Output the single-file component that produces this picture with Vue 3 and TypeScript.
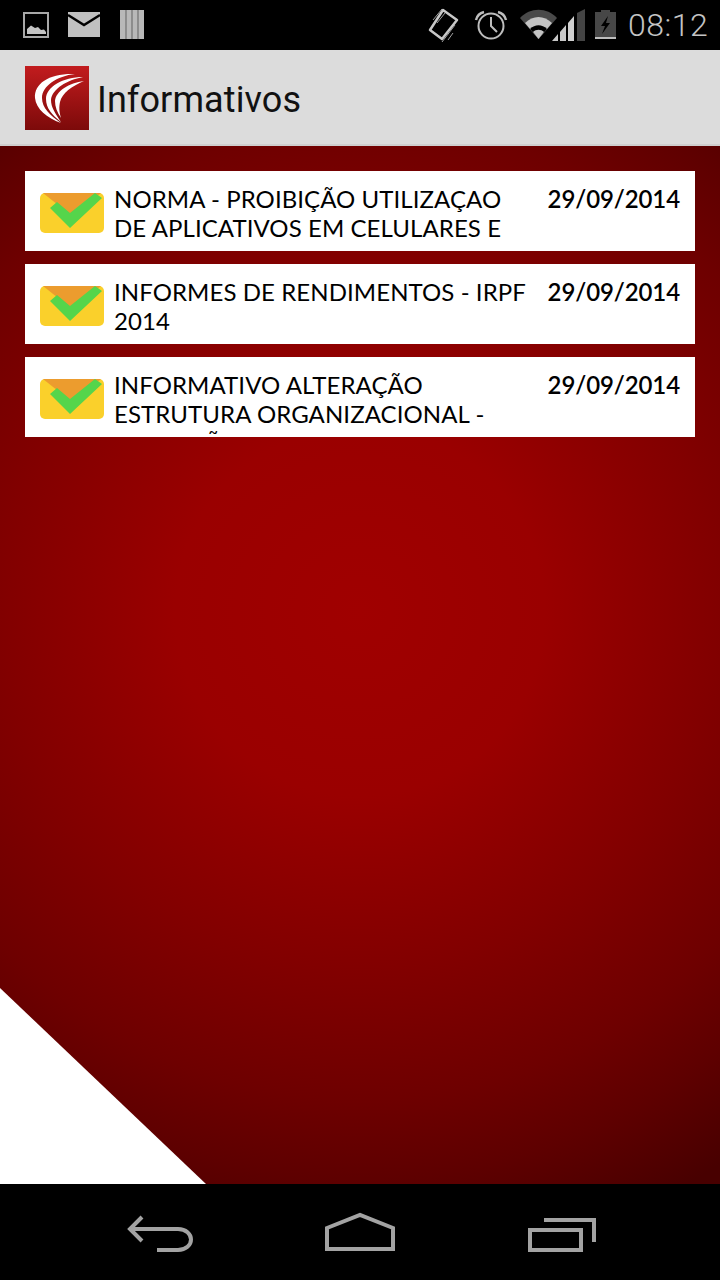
<script setup lang="ts">
interface Notice {
  title: string
  date: string
}
const notices: Notice[] = [
  { title: 'NORMA - PROIBIÇÃO UTILIZAÇAO DE APLICATIVOS EM CELULARES E TABLETS', date: '29/09/2014' },
  { title: 'INFORMES DE RENDIMENTOS - IRPF 2014', date: '29/09/2014' },
  { title: 'INFORMATIVO ALTERAÇÃO ESTRUTURA ORGANIZACIONAL - INOVAÇÃO', date: '29/09/2014' },
]
</script>

<template>
  <div class="screen">
    <header class="status">
      <svg class="ic" width="28" height="50" viewBox="0 0 28 50">
        <rect x="2" y="13" width="24" height="24" fill="none" stroke="#a8a8a8" stroke-width="2" />
        <path d="M5 34V29L9 25.500L13 28L16 27L19 30L22 29.500L24 32V34Z" fill="#c4c4c4" />
      </svg>
      <svg class="ic mail" width="34" height="50" viewBox="0 0 34 50">
        <rect x="1" y="12" width="32" height="25" fill="#c0c0c0" />
        <path d="M1 15L17 25L33 15" fill="none" stroke="#000" stroke-width="2.500" />
      </svg>
      <svg class="ic books" width="26" height="50" viewBox="0 0 26 50">
        <path d="M1 10H25V39H1Z" fill="#b8b8b8" />
        <path d="M7 10V39M13 10V39M19 10V39" stroke="#707070" stroke-width="1.200" />
      </svg>
      <svg class="ic vibrate" width="31" height="50" viewBox="0 0 31 50">
        <path d="M15 10L29 20L14 39L2 30Z" fill="none" stroke="#c8c8c8" stroke-width="2.500" stroke-linejoin="round" />
        <path d="M5 20L14 9M9 23L17 13M14 42L27 25M20 40L25 33" stroke="#a0a0a0" stroke-width="1" fill="none" />
      </svg>
      <svg class="ic alarm" width="34" height="50" viewBox="0 0 34 50">
        <circle cx="17" cy="26" r="12.500" fill="none" stroke="#bdbdbd" stroke-width="2" />
        <path d="M17 17V26L23 32" fill="none" stroke="#bdbdbd" stroke-width="2" />
        <path d="M2 20C3 16 6 13 10 12M32 20C31 16 28 13 24 12" fill="none" stroke="#bdbdbd" stroke-width="2.500" />
      </svg>
      <svg class="ic signal" width="67" height="50" viewBox="0 0 67 50">
        <path d="M1 18C11 7 28 7 38 18L19.500 39Z" fill="#4a4a4a" />
        <path d="M6 23C14 15 25 15 33 23L19.500 39Z" fill="#c4c4c4" />
        <path d="M11 29C16 24 23 24 28 29L19.500 39Z" fill="#000" />
        <path d="M14 32C17 29 22 29 25 32L19.500 39Z" fill="#c4c4c4" />
        <path d="M33 41L39 34V41Z M41 32L47 25V41H41Z" fill="#c8c8c8" />
        <path d="M49 23L55 16V41H49Z" fill="#d0d0d0" />
        <path d="M58 13L66 9V41H58Z" fill="#444" />
      </svg>
      <svg class="ic battery" width="23" height="50" viewBox="0 0 23 50">
        <path d="M7 10H16V12H22V37H1V12H7Z" fill="#474747" />
        <rect x="1" y="37" width="21" height="2" fill="#bdbdbd" />
        <path d="M14 16L7 26H11L8 34L16 23H12Z" fill="#000" />
      </svg>
      <span class="clock">08:12</span>
    </header>

    <div class="appbar">
      <svg class="logo" width="64" height="64" viewBox="0 0 64 64">
        <defs>
          <linearGradient id="logoFill" x1="0" y1="0" x2="0" y2="1">
            <stop offset="0" stop-color="#c21c1e" />
            <stop offset="1" stop-color="#7c0a0a" />
          </linearGradient>
        </defs>
        <rect width="64" height="64" fill="url(#logoFill)" />
        <g fill="#fff">
          <path d="M50 8C25 7 9 17 10 32C11 43 22 52 36 57C25 49 17 42 17 32C17 20 32 10 50 8Z" />
          <path d="M58 11C38 11 21 21 21 33C21 42 27 49 36 56C30 47 26 41 26 34C27 23 42 14 58 11Z" />
          <path d="M59 15C44 17 31 25 30 35C30 41 32 46 36 52C34 45 34 41 35 36C37 27 47 20 59 15Z" />
        </g>
      </svg>
      <h1 class="title">Informativos</h1>
    </div>

    <main class="content">
      <div class="corner"></div>
      <ul class="list">
        <li v-for="n in notices" :key="n.title" class="row">
          <svg class="envelope" width="64" height="40" viewBox="0 0 64 40">
            <rect width="64" height="40" rx="5" fill="#fad02b" />
            <path d="M3 0H61L32 23Z" fill="#ec9c2e" />
            <path d="M10 15L17 9L30 20L55 0L62 5L30 35Z" fill="#55d54b" />
          </svg>
          <p class="text">{{ n.title }}</p>
          <span class="date">{{ n.date }}</span>
        </li>
      </ul>
    </main>

    <nav class="nav">
      <svg width="80" height="96" viewBox="0 0 80 96">
        <path d="M22 33L10 45L22 57M10 45H58C66 45 71 50 71 55.500C71 61 66 66 58 66H37" fill="none" stroke="#a3a3a3" stroke-width="4" />
      </svg>
      <svg width="80" height="96" viewBox="0 0 80 96">
        <path d="M7 44L40 31L73 44V65H7Z" fill="none" stroke="#a3a3a3" stroke-width="4" />
      </svg>
      <svg width="80" height="96" viewBox="0 0 80 96">
        <rect x="10" y="46" width="51" height="20" fill="none" stroke="#a3a3a3" stroke-width="4" />
        <path d="M24 36H74V58" fill="none" stroke="#a3a3a3" stroke-width="4" />
      </svg>
    </nav>
  </div>
</template>

<style>
html, body { margin: 0; padding: 0; background: #000; }
</style>

<style scoped>
.screen {
  width: 720px;
  height: 1280px;
  display: flex;
  flex-direction: column;
  overflow: hidden;
}
.status {
  height: 50px;
  background: #000;
  display: flex;
  align-items: flex-start;
  padding: 0 12px 0 22px;
  box-sizing: border-box;
  flex: none;
}
.ic { display: block; flex: none; }
.mail { margin-left: 17px; }
.books { margin-left: 18px; }
.vibrate { margin-left: auto; }
.alarm { margin-left: 15px; }
.signal { margin-left: 11px; }
.battery { margin-left: 8px; }
.clock {
  margin-left: 11px;
  font: 300 32px/50px Roboto, sans-serif;
  letter-spacing: 0.5px;
  color: #c4c4c4;
  width: 80px;
  white-space: nowrap;
}
.appbar {
  height: 96px;
  box-sizing: border-box;
  background: #dcdcdc;
  border-bottom: 2px solid #cfcfcf;
  display: flex;
  align-items: center;
  padding: 2px 0 0 25px;
  gap: 8px;
  flex: none;
}
.logo { display: block; flex: none; }
.title {
  margin: 4px 0 0;
  font: 400 36px/1 Roboto, sans-serif;
  letter-spacing: 0.1px;
  color: #111;
}
.content {
  position: relative;
  flex: 1;
  padding: 25px 25px 0;
  background: radial-gradient(circle 660px at 360px 465px, #a00000 0%, #9a0000 28%, #820000 54%, #6e0000 74%, #5e0000 86%, #480000 100%);
  overflow: hidden;
}
.corner {
  position: absolute;
  left: 0;
  bottom: 0;
  width: 206px;
  height: 196px;
  background: #fff;
  clip-path: polygon(0 0, 100% 100%, 0 100%);
}
.list {
  list-style: none;
  margin: 0;
  padding: 0;
  display: flex;
  flex-direction: column;
  gap: 13px;
  position: relative;
}
.row {
  height: 80px;
  background: #fff;
  display: flex;
  align-items: flex-start;
  padding: 13px 15px 0;
  box-sizing: border-box;
  overflow: hidden;
}
.envelope {
  display: block;
  flex: none;
  margin-top: 9px;
  filter: blur(0.4px);
}
.text {
  margin: 0 0 0 10px;
  width: 416px;
  height: 64px;
  overflow: hidden;
  flex: none;
  font: 400 24px/29px Lato, sans-serif;
  letter-spacing: 0.08px;
  color: #000;
}
.date {
  margin-left: auto;
  font: 600 24px/29px Lato, sans-serif;
  letter-spacing: -0.1px;
  color: #000;
  white-space: nowrap;
}
.nav {
  height: 96px;
  background: #000;
  display: flex;
  gap: 120px;
  padding-left: 120px;
  flex: none;
}
.nav svg { display: block; flex: none; }
</style>
